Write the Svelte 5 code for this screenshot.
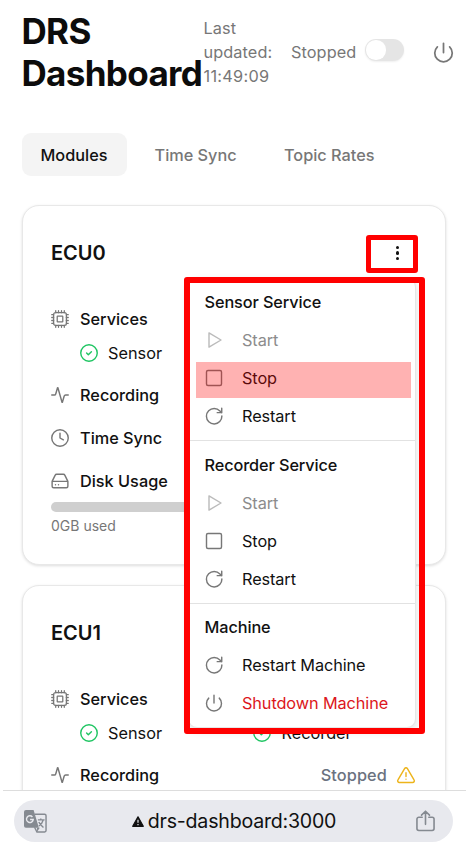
<script>
  const paths = {
    cpu: '<rect x="3.500" y="3.500" width="17" height="17" rx="2.500"/><rect x="8.300" y="8.300" width="7.400" height="7.400" rx=".5"/><path d="M6.300 1v2.500M10 1v2.500M14 1v2.500M17.700 1v2.500M6.300 20.500V23M10 20.500V23M14 20.500V23M17.700 20.500V23M1 6.300h2.500M1 10h2.500M1 14h2.500M1 17.700h2.500M20.500 6.300H23M20.500 10H23M20.500 14H23M20.500 17.700H23"/>',
    activity: '<path d="M23 12h-3.500a2 2 0 0 0-1.900 1.400l-2.400 8.300a.3.3 0 0 1-.5 0L9.200 2.300a.3.3 0 0 0-.5 0l-2.400 8.300A2 2 0 0 1 4.500 12H1"/>',
    clock: '<circle cx="12" cy="12" r="11"/><path d="M12 5.500V12l4.500 2.500"/>',
    drive: '<path d="M1.500 12.500h21M5.600 4.200 1.500 12.500v6.500a2 2 0 0 0 2 2h17a2 2 0 0 0 2-2v-6.500l-4.100-8.300a2 2 0 0 0-1.800-1.200H7.400a2 2 0 0 0-1.800 1.200zM6 17h.01M10 17h.01"/>',
    check: '<circle cx="12" cy="12" r="11"/><path d="m8.800 12 2.300 2.300 4.100-4.100"/>',
    play: '<path d="M4 2.500v19L20 12z"/>',
    square: '<rect x="2" y="2" width="20" height="20" rx="2"/>',
    rotate: '<path d="M22.500 12A10.300 10.300 0 1 1 12.200 2c2.900 0 5.700 1.200 7.700 3.200l2.300 2.300M22.300 1.500v6h-6"/>',
    power: '<path d="M12 1.500v10.500M19 5.500a10 10 0 1 1-14 0"/>',
    warn: '<path d="m22.700 18.500-8.800-15a2.200 2.200 0 0 0-3.800 0l-8.800 15A2.200 2.200 0 0 0 3.200 22h17.600a2.200 2.200 0 0 0 1.900-3.500zM12 9v5M12 17.500h.01"/>'
  };
  const menu = [
    { title: 'Sensor Service', items: [['play', 'Start', 'disabled'], ['square', 'Stop', 'marked'], ['rotate', 'Restart', '']] },
    { title: 'Recorder Service', items: [['play', 'Start', 'disabled'], ['square', 'Stop', ''], ['rotate', 'Restart', '']] },
    { title: 'Machine', items: [['rotate', 'Restart Machine', ''], ['power', 'Shutdown Machine', 'danger']] }
  ];
</script>

{#snippet icon(name)}
  <svg class="icon {name}" viewBox="0 0 24 24">{@html paths[name]}</svg>
{/snippet}

{#snippet card(name, full)}
  <section class="card">
    <div class="card-head">
      <h2>{name}</h2>
      {#if full}<button class="kebab" aria-label="{name} menu"><i></i><i></i><i></i></button>{/if}
    </div>
    <div class="row services">{@render icon('cpu')}<span>Services</span></div>
    <div class="checks">
      <div class="check-item">{@render icon('check')}<span>Sensor</span></div>
      {#if !full}<div class="check-item">{@render icon('check')}<span>Recorder</span></div>{/if}
    </div>
    <div class="row recording">
      {@render icon('activity')}<span>Recording</span>
      {#if !full}<div class="state"><span>Stopped</span>{@render icon('warn')}</div>{/if}
    </div>
    {#if full}
      <div class="row">{@render icon('clock')}<span>Time Sync</span></div>
      <div class="row">{@render icon('drive')}<span>Disk Usage</span></div>
      <div class="bar"></div>
      <div class="used">0GB used</div>
    {/if}
  </section>
{/snippet}

<div class="screen">
  <div class="page">
    <header>
      <h1>DRS<br />Dashboard</h1>
      <div class="updated">Last<br />updated:<br /><span class="time">11:49:09</span></div>
      <span class="stopped">Stopped</span>
      <span class="switch"><b></b></span>
      <span class="top-power">{@render icon('power')}</span>
    </header>
    <nav>
      <button class="tab active"><span>Modules</span></button>
      <button class="tab sync"><span>Time Sync</span></button>
      <button class="tab rates"><span>Topic Rates</span></button>
    </nav>
    {@render card('ECU0', true)}
    {@render card('ECU1', false)}
  </div>

  <div class="menu">
    {#each menu as group}
      <div class="group">
        <div class="group-title">{group.title}</div>
        {#each group.items as [glyph, label, kind]}
          <div class="item {kind}">{@render icon(glyph)}<span>{label}</span></div>
        {/each}
      </div>
    {/each}
  </div>
  <div class="frame menu-frame"></div>
  <div class="frame kebab-frame"></div>

  <footer>
    <div class="pill">
      <svg class="translate" viewBox="0 0 24 24">
        <path d="M11 4.500h10.500a1.500 1.500 0 0 1 1.500 1.500v15.500a1.500 1.500 0 0 1-1.500 1.500H13.500L11 18" fill="none" stroke="#858a91" stroke-width="1.500" />
        <path d="M2 0h8l5.500 18.500H2a2 2 0 0 1-2-2V2a2 2 0 0 1 2-2z" fill="#858a91" />
        <path d="M13.500 18.500h3L13.500 23z" fill="#858a91" />
        <path d="M8.800 7.300A3.500 3.500 0 1 0 9.600 10H6.300" fill="none" stroke="#e8e9ee" stroke-width="1.500" />
        <path d="M14.500 10.300h7M17.500 8.800v1.500M20 10.500c-.7 2.700-2.300 4.700-4.500 6.200M15.500 12.500c1 2.300 2.700 4 4.800 5.700" fill="none" stroke="#858a91" stroke-width="1.500" />
      </svg>
      <div class="address">
        <svg class="alert" viewBox="0 0 12 11"><path d="M6 .8 11.300 10.300H.7z" fill="#111" stroke="#111" stroke-width="1.200" stroke-linejoin="round" /><path d="M6 3.800v3M6 8v1.300" stroke="#e8e9ee" stroke-width="1.200" /></svg>
        <span>drs-dashboard:3000</span>
      </div>
      <svg class="share" viewBox="0 0 20 23"><path d="M6.500 7.500H3a2 2 0 0 0-2 2v10a2 2 0 0 0 2 2h14a2 2 0 0 0 2-2v-10a2 2 0 0 0-2-2h-3.500M10 15V1.500M5.800 5.300 10 1.200l4.200 4.100" /></svg>
    </div>
  </footer>
</div>

<style>
  :global(body) { margin: 0; background: #fff; }
  * { box-sizing: border-box; }
  .screen {
    position: relative; width: 469px; height: 852px; overflow: hidden;
    display: flex; flex-direction: column; background: #fff; color: #111;
    font-family: Inter, "Liberation Sans", sans-serif; font-size: 16.300px;
  }
  button { font: inherit; border: 0; background: none; padding: 0; margin: 0; color: inherit; }
  .page { flex: 1; min-height: 0; overflow: hidden; padding: 0 23px 0 21.500px; }
  .icon {
    display: block; flex: none; width: 18px; height: 18px; fill: none; stroke: #777;
    stroke-width: 1.900; stroke-linecap: round; stroke-linejoin: round; overflow: visible;
  }
  .cpu { stroke-width: 1.700; }
  header { display: flex; align-items: center; height: 88px; margin-top: 8px; white-space: nowrap; color: #777; }
  h1 { margin: 0; width: 182px; color: #0c0c0c; font-size: 35px; line-height: 42.500px; font-weight: 700; letter-spacing: -.66px; }
  .updated { line-height: 24px; width: 87.500px; letter-spacing: .1px; }
  .time { letter-spacing: .28px; }
  .stopped { width: 74px; letter-spacing: .08px; }
  .switch { width: 39px; height: 22px; border-radius: 11px; background: #e5e5e5; padding: 1px; margin-top: -4px; box-shadow: 0 1px 2px #0001; }
  .switch b { display: block; width: 19.500px; height: 19.500px; border-radius: 50%; background: #fff; }
  h1, .updated, .stopped, .switch { flex: none; }
  .top-power { margin-left: 29px; }
  .top-power .icon { width: 21px; height: 21px; stroke-width: 2; }
  nav { display: flex; margin-top: 37px; height: 43px; font-weight: 500; color: #777; white-space: nowrap; }
  .tab { height: 43px; text-align: left; padding-bottom: 0; }
  .active { width: 105px; padding-left: 19px; border-radius: 9px; background: #f4f4f4; color: #111; }
  .sync { margin-left: 28px; width: 129.500px; }
  .card {
    height: 360.500px; margin-top: 28.500px; padding: 28.500px 31px 0 28.500px; border: 1.500px solid #e8e8e8; border-radius: 17px;
    box-shadow: 0 1px 3px #0002; background: #fff;
  }
  .card + .card { margin-top: 19.500px; }
  .card + .card .state { margin-right: -1px; }
  .card-head { display: flex; justify-content: space-between; align-items: center; height: 37px; padding-top: 1px; }
  h2 { margin: 0; font-size: 20px; font-weight: 600; }
  .kebab { display: flex; flex-direction: column; gap: 2.400px; margin-right: 15px; }
  .kebab i { width: 3.400px; height: 3.400px; border-radius: 50%; background: #111; }
  .row { display: flex; align-items: center; gap: 11px; height: 42.800px; font-weight: 500; white-space: nowrap; }
  .services { margin-top: 27px; height: 42px; }
  .checks { display: flex; height: 25px; }
  .check-item { display: flex; align-items: center; gap: 10.500px; flex: none; width: 173.500px; padding-left: 28.500px; }
  .check { stroke: #20c563; }
  .recording { margin-top: 9px; }
  .state { display: flex; align-items: center; gap: 10px; margin-left: auto; color: #6b7280; letter-spacing: .12px; }
  .warn { stroke: #edb41b; }
  .bar { height: 10px; border-radius: 5px; background: #cfcfcf; }
  .used { margin-top: 4px; line-height: 19px; font-size: 14px; color: #777; }
  .menu {
    position: absolute; left: 188px; top: 278px; width: 228px; height: 449.500px; padding-top: 4px;
    background: #fff; border: 1.500px solid #e6e6e6; border-radius: 9px; box-shadow: 0 3px 8px #0002; white-space: nowrap;
    letter-spacing: -.1px;
  }
  .group + .group { border-top: 1px solid #e2e2e2; margin-top: 5px; padding-top: 4.500px; }
  .group-title { display: flex; align-items: center; height: 38px; padding-left: 15.500px; font-weight: 500; }
  .item { position: relative; display: flex; align-items: center; gap: 19.500px; height: 38px; padding-left: 15.500px; }
  .disabled { color: #8c8c8c; }
  .disabled .icon { stroke: #bbb; }
  .play { margin-left: 1px; margin-right: -1px; }
  .danger { color: #dc1620; }
  .marked::after { content: ""; position: absolute; left: 7px; top: 3px; width: 215px; height: 36px; background: rgba(255, 0, 0, .3); }
  .frame { position: absolute; border: solid #f00; border-radius: 3px; }
  .menu-frame { left: 184px; top: 276.500px; width: 241px; height: 457px; border-width: 6px; }
  .kebab-frame { left: 366px; top: 235px; width: 52px; height: 38px; border-width: 5px; }
  footer { position: relative; height: 62px; padding: 9px 12px 0 11px; margin: 0 3px; border-top: 1px solid #ddd; background: #fff; }
  .pill { display: flex; align-items: center; justify-content: space-between; height: 42px; width: 439px; padding: 0 18px 0 10px; border-radius: 21px; background: #e8e9ee; }
  .translate { width: 23px; height: 23px; }
  .address { display: flex; align-items: center; gap: 4px; margin-left: 5px; font-size: 19.600px; line-height: 26px; letter-spacing: -.22px; white-space: nowrap; }
  .alert { width: 12px; height: 11px; }
  .share { width: 19px; height: 22px; fill: none; stroke: #858a91; stroke-width: 1.700; stroke-linecap: round; stroke-linejoin: round; }
</style>
